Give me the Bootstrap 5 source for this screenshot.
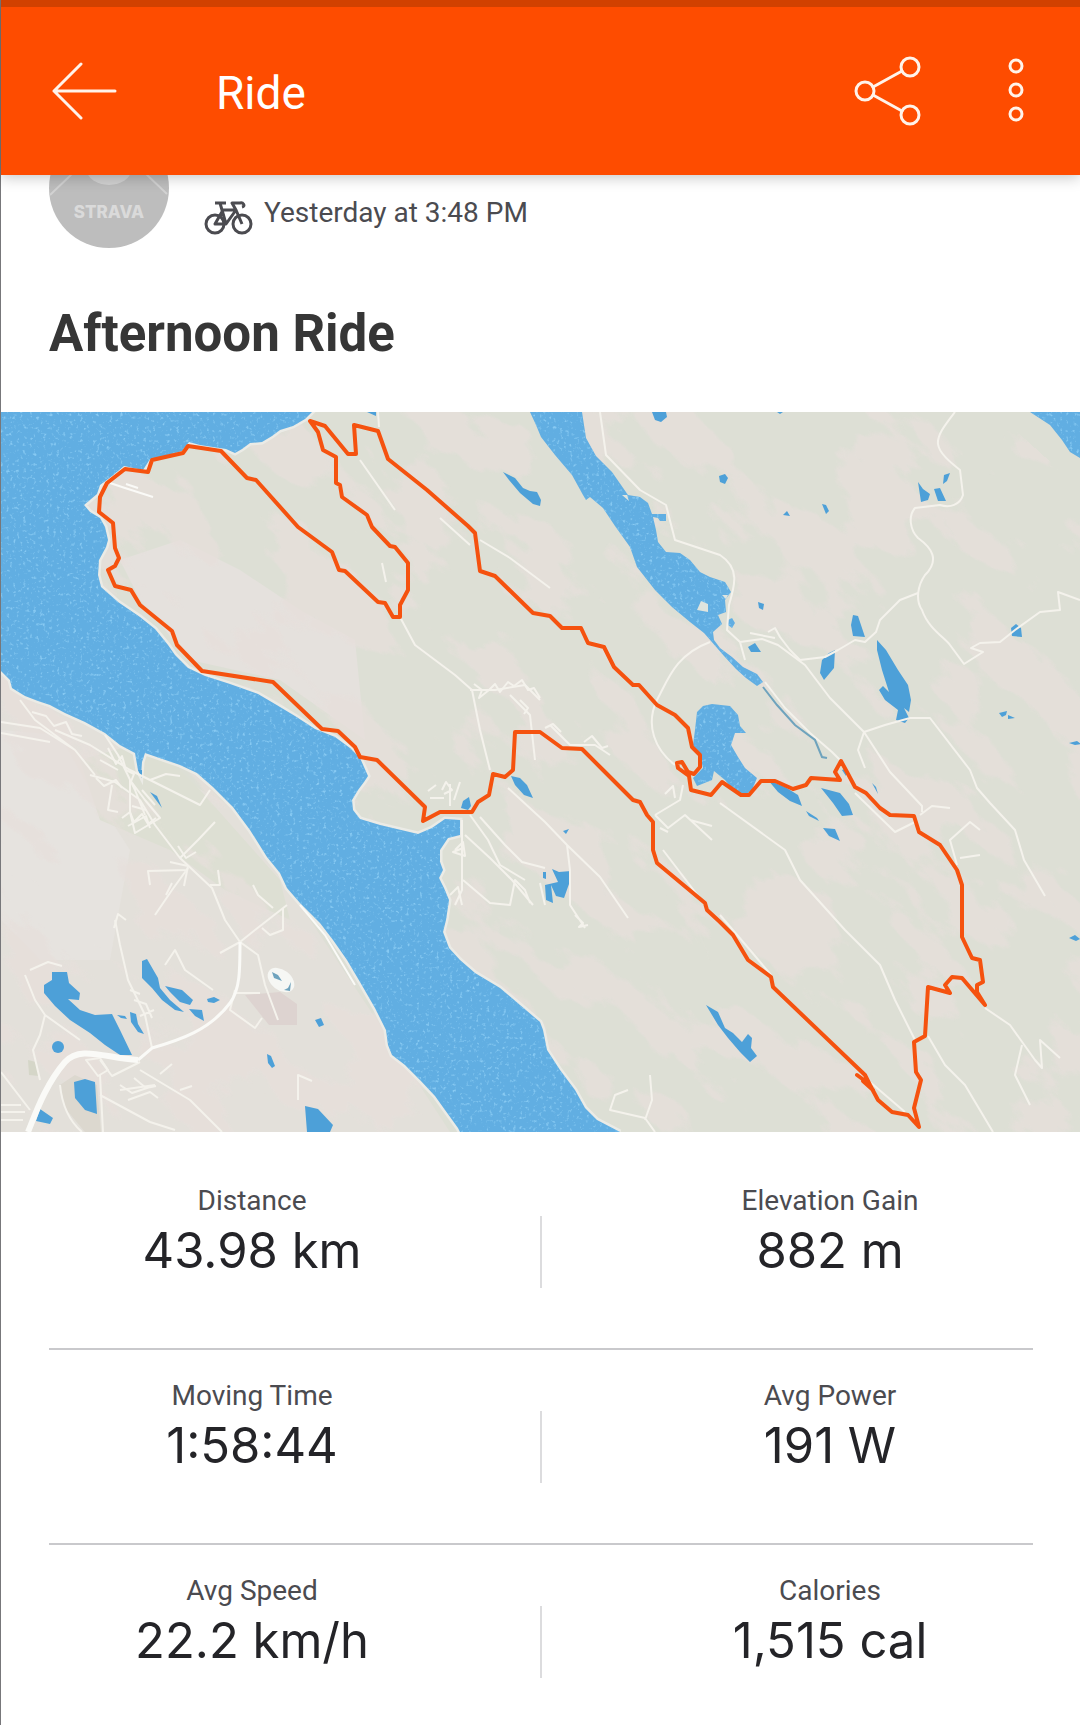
<!DOCTYPE html>
<html lang="en">
<head>
<meta charset="utf-8">
<meta name="viewport" content="width=device-width, initial-scale=1">
<title>Ride</title>
<link href="https://cdn.jsdelivr.net/npm/bootstrap@5.3.0/dist/css/bootstrap.min.css" rel="stylesheet">
<style>
  body { font-family: Roboto, "Liberation Sans", sans-serif; background: #fff; color: #4b4b50; }
  .app-shell { border-left: 1px solid #77777a; min-height: 100vh; }
  .app-bar { background: #fe4c00; border-top: 7px solid #d14100; height: 175px; padding: 0 56px 0 51px; z-index: 10; box-shadow: 0 2px 14px rgba(0,0,0,.24); }
  .app-bar h1 { font-size: 46px; line-height: 52px; color: #fff; margin-left: 99px; padding-top: 4px; }
  .icon-action { background: none; border: 0; padding: 0; display: block; line-height: 0; }
  .icon-action svg { fill: none; stroke: #fff3ea; stroke-width: 3; stroke-linecap: round; stroke-linejoin: round; }
  .app-actions { gap: 86px; }
  .side-pad { padding-left: 48px; padding-right: 47px; }
  .profile-row { margin-top: -47px; gap: 35px; }
  .when-line { font-size: 28px; line-height: 32px; gap: 11px; margin-top: 50px; }
  .bike-icon { margin-top: 10px; }
  .ride-title { font-size: 51px; line-height: 60px; color: #363636; padding: 56px 0 48px; }
  .avatar-word { font: 800 17px Inter, sans-serif; fill: #dadada; }
  .route-map { width: 100%; height: auto; }
  .stats { padding-top: 23px; }
  .stat-row { padding: 29px 0 49px; min-height: 195px; border-bottom: 2px solid #c9c9cc; }
  .stat-row:last-child { border-bottom: 0; }
  .stat-row > .vr-line { width: 2px; height: 72px; background: #dcdcde; margin-top: 32px; }
  .stat-cell { padding: 0 85px 0 0; }
  .stat-cell + .vr-line + .stat-cell { padding: 0 0 0 85px; }
  .stat-cell dt { font-size: 28px; line-height: 34px; font-weight: 400; }
  .stat-cell dd { font-family: Inter, "Liberation Sans", sans-serif; font-size: 49px; line-height: 60px; color: #242428; margin: 3px 0 0; }
</style>
<script src="https://cdn.jsdelivr.net/npm/bootstrap@5.3.0/dist/js/bootstrap.bundle.min.js"></script>
</head>
<body>
<div class="app-shell">
  <header class="app-bar sticky-top d-flex align-items-center">
    <button class="icon-action" type="button" aria-label="Back">
      <svg width="65" height="60" viewBox="0 0 65 60"><path d="M63 30H2M29 3 2 30l27 27"/></svg>
    </button>
    <h1 class="fw-normal mb-0">Ride</h1>
    <div class="app-actions d-flex align-items-center ms-auto">
      <button class="icon-action" type="button" aria-label="Share">
        <svg width="68" height="70" viewBox="0 0 68 70"><circle cx="11" cy="35" r="9"/><circle cx="56" cy="11" r="9"/><circle cx="56" cy="59" r="9"/><path d="M19 31 48 15M19 39l29 16"/></svg>
      </button>
      <button class="icon-action" type="button" aria-label="More options">
        <svg width="16" height="66" viewBox="0 0 16 66"><circle cx="8" cy="8" r="6"/><circle cx="8" cy="32" r="6"/><circle cx="8" cy="56" r="6"/></svg>
      </button>
    </div>
  </header>

  <main>
    <section class="side-pad">
      <div class="profile-row d-flex">
        <svg width="120" height="120" viewBox="0 0 120 120" role="img" aria-label="Athlete">
          <circle cx="60" cy="60" r="60" fill="#bdbdbd"/>
          <ellipse cx="60" cy="42" rx="22" ry="15" fill="#d2d2d2"/>
          <path d="M24 45 1 67M96 45l22 21" stroke="#d2d2d2" stroke-width="2"/>
          <text class="avatar-word" x="60" y="90" text-anchor="middle">STRAVA</text>
        </svg>
        <div class="when-line d-flex align-items-center">
          <svg class="bike-icon" width="49" height="34" viewBox="0 0 49 34" fill="none" stroke="#4b4b50" stroke-width="3" stroke-linejoin="round">
            <circle cx="11" cy="23" r="9"/><circle cx="38" cy="23" r="9"/>
            <path d="M11 23 19 9h13L22 23zM22 23 16 2M32 9l6 14M11 2h11M38 6c4-1 1-5-2-4h-8l4 7" />
          </svg>
          <span>Yesterday at 3:48 PM</span>
        </div>
      </div>
      <h2 class="ride-title fw-bold mb-0">Afternoon Ride</h2>
    </section>

    <svg class="route-map d-block" viewBox="1 412 1079 720" role="img" aria-label="Map of the ride">
      <defs>
        <filter id="ripples" x="0" y="0" width="100%" height="100%" color-interpolation-filters="sRGB">
          <feTurbulence type="fractalNoise" baseFrequency=".3" numOctaves="2" seed="4"/>
          <feColorMatrix values="0 0 0 0 .53  0 0 0 0 .79  0 0 0 0 .95  4 0 0 0 -2.3" result="light"/>
          <feComposite in="light" in2="SourceAlpha" operator="in" result="spots"/>
          <feMerge><feMergeNode in="SourceGraphic"/><feMergeNode in="spots"/></feMerge>
        </filter>
        <filter id="mottle" x="0" y="0" width="100%" height="100%" color-interpolation-filters="sRGB">
          <feTurbulence type="fractalNoise" baseFrequency=".009 .02" numOctaves="5" seed="8"/>
          <feColorMatrix values="0 0 0 0 .905  0 0 0 0 .875  0 0 0 0 .86  14 0 0 0 -7.3"/>
        </filter>
        <clipPath id="mapframe"><rect x="1" y="412" width="1079" height="720"/></clipPath>
      </defs>
      <g clip-path="url(#mapframe)">
        <rect x="1" y="412" width="1079" height="720" fill="#dddfd5"/>
        <path d="M1 670 60 705l75 50 95 50 60 85 100 150 60 92H1z" fill="#e3e0da"/>
        <path d="M1 730 60 735 85 780 130 850 110 960 40 960 1 920z" fill="#e6e3df"/>
        <path d="M150 740 200 790 280 880 290 920 225 890 170 850 100 820 80 760z" fill="#dddfd3"/>
        <path d="M180 540 240 570 300 610 355 640 365 740 280 680 190 660 140 600 120 560z" fill="#e5e1dd"/>
        <rect x="-100" y="200" width="1500" height="1200" transform="rotate(42 540 770)" filter="url(#mottle)" opacity=".75"/>
        <path d="M245 995 280 992l17 12v21h-28z" fill="#ddd3d0"/>
        <path d="M60 1085 75 1075l22 10 4 47H85l-20-24z" fill="#dcd8cf"/><path d="M28 1060l8 2 3 14-10-1z" fill="#d5d6c8"/>

        <!-- shoreline and fjord -->
        <path d="M1 412H312L305 419 293 426 280 430 272 436 262 442 250 443 242 449 235 453 226 449 200 445 189 442 182 451 165 456 150 459 143 470 124 466 112 476 100 485 97 494 84 505 90 512 100 518 105 527 108 540 106 547 99 560 98 575 101 587 118 602 140 617 155 629 168 645 175 655 188 668 205 676 230 684 258 694 275 704 295 716 315 729 335 737 350 748 360 758 368 776 364 782 358 790 352 800 353 810 360 819 380 825 418 834 432 828 445 819 460 820V835L448 838 440 850 440 862 443 870 439 878 444 888 449 900 446 920 443 932 449 948 460 960 475 973 500 988 520 1005 540 1022 543 1030 547 1050 560 1070 575 1090 585 1108 597 1120 620 1132H460L458 1128 445 1110 435 1096 420 1080 405 1065 392 1055 388 1045 386 1030 375 1008 360 982 347 960 333 940 320 923 300 903 287 888 280 873 267 857 250 830 233 807 213 787 197 773 180 765 145 753 142 762 141 776 138 770 135 753 120 745 105 733 85 722 65 713 50 705 38 701 25 696 12 688 10 680 1 671z" fill="none" stroke="#ebebe6" stroke-width="5"/>
        <g fill="#61aee2" filter="url(#ripples)">
          <path d="M1 412H312L305 419 293 426 280 430 272 436 262 442 250 443 242 449 235 453 226 449 200 445 189 442 182 451 165 456 150 459 143 470 124 466 112 476 100 485 97 494 84 505 90 512 100 518 105 527 108 540 106 547 99 560 98 575 101 587 118 602 140 617 155 629 168 645 175 655 188 668 205 676 230 684 258 694 275 704 295 716 315 729 335 737 350 748 360 758 368 776 364 782 358 790 352 800 353 810 360 819 380 825 418 834 432 828 445 819 460 820V835L448 838 440 850 440 862 443 870 439 878 444 888 449 900 446 920 443 932 449 948 460 960 475 973 500 988 520 1005 540 1022 543 1030 547 1050 560 1070 575 1090 585 1108 597 1120 620 1132H460L458 1128 445 1110 435 1096 420 1080 405 1065 392 1055 388 1045 386 1030 375 1008 360 982 347 960 333 940 320 923 300 903 287 888 280 873 267 857 250 830 233 807 213 787 197 773 180 765 145 753 142 762 141 776 138 770 135 753 120 745 105 733 85 722 65 713 50 705 38 701 25 696 12 688 10 680 1 671z"/>
          <path d="M530 412 536 425 541 437 555 455 572 475 583 495 586 500 590 497 603 508 615 526 630 547 637 567 655 590 672 607 690 622 704 633 711 641 724 656 736 669 746 678 757 686 763 682 757 674 743 667 732 657 720 648 714 640 713 632 722 624 718 615 726 612 725 600 731 592 725 582 710 577 700 572 690 560 680 553 666 552 658 542 656 530 653 517 658 518 660 521 666 521 666 514 652 514 648 503 640 497 628 495 612 472 596 456 586 438 582 412z"/>
          <path d="M1030 412 1050 425 1062 440 1070 452 1080 458V412z"/>
          <path d="M697 712 703 706 712 704 730 706 738 715 740 726 746 733 735 733 731 745 738 757 745 768 757 778 752 790 745 795 735 792 725 780 714 771 712 780 697 786 693 778 703 768 700 755 693 745 695 730z"/>
          <path d="M728 620l4-2 3 5-3 5-4-3z"/>
        </g>
        <path d="M697 610l4-9 7 3v8zM722 595h6l-2 4zM622 495l5 0 2 6z" fill="#dfe4de"/>

        <!-- lakes and tarns -->
        <g fill="#4da0d8">
          <path d="M503 472 515 478 523 488 530 491 537 492 541 500 540 506 533 504 520 493 509 480z"/><path d="M652 412 655 420 661 422 667 417 666 412zM367 412h9v4zM777 412h6l-3 2z"/>
          <path d="M719 476l6-2 3 4-3 6-5-2zM918 482 923 489 930 494 928 500 921 502zM934 489 940 488 946 501 938 501zM944 475l6-2-3 8-4 3zM822 504l4 1 3 6-3 3zM783 515l4-4 3 5zM758 602l6 2-1 6-4-2z"/>
          <path d="M853 615 858 616 865 637 853 636 851 625zM829 653 835 650 834 668 824 680 820 673 822 660zM748 647 755 643 761 652 751 652zM877 640 886 650 898 670 908 685 911 700 909 712 904 708 909 718 905 723 896 720 898 710 885 700 879 690 883 686 889 692 882 670 877 650zM1011 628 1016 624 1021 628 1022 637 1012 636zM999 713l8-2-1 4-4 2zM1008 715l7 3-7 1zM1069 743l8-2 4 3-6 1zM1069 938l6-3 5 4-4 2z"/>
          <path d="M768 780 785 787 798 795 802 806 790 801 778 792zM806 811l11 7 2 3-10-5zM823 828 835 829 840 841 829 836zM821 788 840 793 849 804 853 815 842 816 833 803zM872 783l4 4 2 7zM842 770l5-2-1 8z"/>
          <path d="M511 776 520 778 527 785 533 798 524 795 515 785zM463 801 469 797 471 806 468 810 461 808zM563 831l6-2-3 5zM552 869 559 872 571 871 569 884 564 898 556 896 551 885 553 903 546 900 545 885 558 882zM543 872l3 0 0 7-3-1z"/>
          <path d="M706 1005 718 1012 725 1028 733 1033 742 1042 748 1034 752 1038 751 1048 757 1056 750 1062 740 1052 728 1038 718 1025z"/>
          <path d="M52 972H67L69 983 80 993 79 1000 68 999 80 1010 95 1015 112 1014 120 1030 132 1055 120 1055 105 1045 90 1033 70 1020 55 1006 44 993 44 985 52 980zM142 961 147 959 158 978 160 988 170 1000 184 1012 175 1010 162 1000 152 988 142 978zM165 986 182 990 193 1000 190 1005 180 1002 170 992zM189 1009 202 1010 204 1021 195 1016zM207 999l7-2 6 3-6 3-6-1zM130 1012 136 1014 138 1024 144 1034 138 1032 131 1022zM117 1015l8 1 2 3-6-1z"/>
          <circle cx="58" cy="1047" r="6"/><path d="M74 1082 85 1079 95 1082 97 1114 85 1110 75 1098zM40 1109 53 1118 50 1124 36 1121zM315 1020l6-2 3 7-5 2zM267 1054l4 2 4 10-3 2-4-5zM305 1106 318 1109 333 1125 330 1132 307 1132zM150 792 157 796 162 808zM138 770l4 0 0 8z"/>
        </g>
        <ellipse cx="281" cy="980" rx="15" ry="10" transform="rotate(38 281 980)" fill="#f6f7f4"/><path d="M272 972l6 3 4 6-8-3zM288 988l3-6-1 9-6-1z" fill="#6fa3bd"/>

        <!-- roads -->
        <g fill="none" stroke="#f4f2ec" stroke-width="2" stroke-linejoin="round">
          <path d="M955 412C945 425 937 435 938 444S950 462 960 470L963 495C960 505 950 508 940 505L915 508C908 516 910 530 918 538 932 548 940 560 925 575 918 585 915 600 922 610 928 628 945 638 950 645L964 664 983 652 971 648 980 643 1000 642 1015 630 1040 612 1060 610 1058 592 1080 600"/>
          <path d="M918 593 900 600 880 620 876 632 865 642 855 640 838 650 825 657 800 660 790 650 780 637 775 628 768 632"/>
          <path d="M600 412 606 455 640 490 666 505 675 540 720 555C740 568 735 585 729 605L727 630 740 642 762 639 778 645 805 665 830 698 864 732 890 772 922 806 922 812M864 732 885 725 910 718 930 718 970 770 977 788 990 803 1015 830 1024 860 1045 896M864 732 858 750 865 768M750 633 775 638M740 642 745 660"/>
          <path d="M710 642C675 655 668 680 657 700 645 725 655 750 675 765M765 682 785 708 810 733 832 752 840 760"/>
          <path d="M379 427 378 412M360 460 395 510M382 563 386 582M480 540 510 558 550 588M440 518 470 545"/>
          <path d="M400 617 415 645 455 675 472 690 480 730 490 770M470 690 495 690 525 685 540 700M510 695 530 715 535 760M550 725 570 745 595 745 610 755"/>
          <path d="M474 684l8 6-3 8 10-8 6-6 5 8 8-10 6 4 8-6 6 10 6-2 6 10M520 700l8 8-4 6M545 728l8-4 8 8M584 742l8-6 10 12 6-2M442 790l4-8 6 8-8 4M430 798h14M450 806v-22M436 785l-8 6M454 800l6-18"/>
          <path d="M508 788 545 822 567 845 600 877 628 918M567 845 570 870 570 905 585 928M480 817 505 845 522 862 545 868M462 820 462 890 455 905M465 835 490 858 512 880 533 905M463 880 490 903 510 905 515 880 525 890 530 903M540 883 545 905M470 815 488 840 500 865 525 880M455 850l8-8 2 14-12-4 10-4M450 895l8-8 4 18M575 915l8 8-4 4 9-2"/>
          <path d="M655 815 680 800 683 785M655 815 668 828 685 815 712 840M720 803 785 850 800 880 845 930 880 965 895 1000 915 1040M928 1036 945 1065 965 1085 993 1132M665 794l8-8 2 12M660 828l8 4M690 820l22 6"/>
          <path d="M720 915 750 950 771 975M870 1082 905 1112M985 1008 1010 1025 1035 1060 1042 1068 1040 1040 1060 1058M1022 1045 1015 1075 1030 1105M855 793 895 832 915 822M920 815 932 806 950 808M957 865 950 840 970 822 980 830M960 858 980 855M655 1132 645 1118 610 1110 615 1095 628 1090M645 1120 652 1100 650 1075M663 850 705 905"/>
          <path d="M1 722 40 728 75 750 95 775M1 733 50 742M20 700 35 720 75 750M105 735 118 755 135 790 145 815M55 730 90 745 130 770 200 805 210 790M90 775 115 782 140 800 155 825 180 858 212 888 225 920 240 942M180 858 198 840 215 822M188 868 172 890 155 915M188 870 148 871 150 885M240 942 220 953M287 905 255 930 240 942 258 955 265 985 278 1020M283 908 283 930 270 935 262 928M218 870 220 885 210 885M253 885 258 895 273 908M115 920 120 945 128 980 145 1015 152 1048M130 780 145 800 160 818 135 833 130 812zM142 790 155 805M112 785 108 810 118 812"/>
          <path d="M32 712l14 4 8 10 12-4 6 12 10 2M108 748l8 16 6-8 4 14 8 4-4 10M100 760l18 10M122 818l8-6 4 10 8-8 6 10 8-6M128 826l18-10 4 12M132 806l14 4M96 778l8 8 12-6 6 8M150 780l16-6 14 2M178 846l8 12 10-6M170 862l18 4-4 20M166 895l6-12M114 928l4-14 8 6"/>
          <path d="M25 975 35 1000 45 1015 40 1035 33 1050 40 1080M45 1015 80 1040M1 1072 30 1110M100 1075 103 1132M60 1085C62 1105 68 1120 82 1132M140 1070 165 1085 190 1100 222 1132M100 1095 150 1122 175 1130M100 1060 112 1076 140 1062M120 1090 155 1085M298 1100V1075l14 6M235 990 230 1010 255 1028 262 1018M165 965l10-15 10 20 28 20M235 993h25"/>
          <path d="M120 1085l12 8 18-6M128 1100l22-8 8 6M134 1078l12 10 10-2M1 1105h20M1 1112h24M1 1120h22M86 1060l14-2 8 12-10 6zM160 1074l12-10M180 1090l12-4M134 1000l12 4 6 14M140 1016l14-6M130 990l10 4M30 970l18-8 14 4"/>
        </g>
        <path d="M763 687 777 705 795 725 815 740 822 757 827 758" fill="none" stroke="#6fa3bd" stroke-width="2"/>
        <g fill="none" stroke="#fafaf7">
          <path d="M240 942C240 970 240 990 230 1003 210 1030 180 1040 152 1048L138 1060" stroke-width="3"/>
          <path d="M28 1132C35 1115 45 1085 65 1062 80 1045 105 1058 138 1060" stroke-width="6"/>
          <path d="M110 483 125 488 153 497M138 488l-12-4M300 905 325 935 355 985" stroke-width="2"/>
        </g>

        <!-- ride track -->
        <path d="M310 421 325 426 348 454 356 454 354 425 378 431 388 459 427 490 468 526 475 533 480 571 495 576 533 613 550 616 562 628 581 628 588 643 604 647 614 667 633 685 639 685 657 705 675 715 688 728 692 747 700 755 700 767 694 774 688 772 682 762 677 763 678 768 689 776 691 790 711 795 722 782 741 795 749 795 761 781 775 781 793 789 806 785 811 778 840 780 835 772 841 761 847 772 855 787 866 793 880 808 890 815 914 816 919 832 940 845 957 870 962 885 962 937 972 958 980 960 983 982 977 985 977 992 985 1005 962 978 952 977 945 985 950 993 928 987 925 1036 914 1042 916 1072 921 1080 914 1108 919 1127 908 1115 892 1112 878 1100 870 1085 865 1075 773 987 771 977 748 960 733 935 720 922 707 910 705 903 657 863 653 850 653 822 647 815 640 802 633 800 603 770 582 749 562 748 540 732 515 732 513 770 505 777 493 774 489 795 478 802 472 812 440 812 423 821 425 807 377 760 360 757 355 747 338 731 322 729 273 682 202 671 177 645 172 631 140 605 131 590 115 586 108 570 115 566 119 558 115 548 113 523 99 512 100 497 107 483 125 469 148 472 152 460 183 453 188 446 221 451 247 478 256 480 298 527 332 552 339 570 345 571 378 602 385 603 393 617 400 617 400 605 408 590 408 563 395 547 390 546 372 527 367 515 342 497 340 485 336 483 336 457 323 450 318 432zM857 1075l11 8-5-2 10 9" fill="none" stroke="#f5520f" stroke-width="4" stroke-linejoin="round" stroke-linecap="round"/>
      </g>
    </svg>

    <section class="stats side-pad">
      <dl class="stat-row d-flex mb-0">
        <div class="stat-cell col text-center"><dt>Distance</dt><dd>43.98 km</dd></div>
        <div class="vr-line"></div>
        <div class="stat-cell col text-center"><dt>Elevation Gain</dt><dd>882 m</dd></div>
      </dl>
      <dl class="stat-row d-flex mb-0">
        <div class="stat-cell col text-center"><dt>Moving Time</dt><dd>1:58:44</dd></div>
        <div class="vr-line"></div>
        <div class="stat-cell col text-center"><dt>Avg Power</dt><dd>191 W</dd></div>
      </dl>
      <dl class="stat-row d-flex mb-0">
        <div class="stat-cell col text-center"><dt>Avg Speed</dt><dd>22.2 km/h</dd></div>
        <div class="vr-line"></div>
        <div class="stat-cell col text-center"><dt>Calories</dt><dd>1,515 cal</dd></div>
      </dl>
    </section>
  </main>
</div>
</body>
</html>
